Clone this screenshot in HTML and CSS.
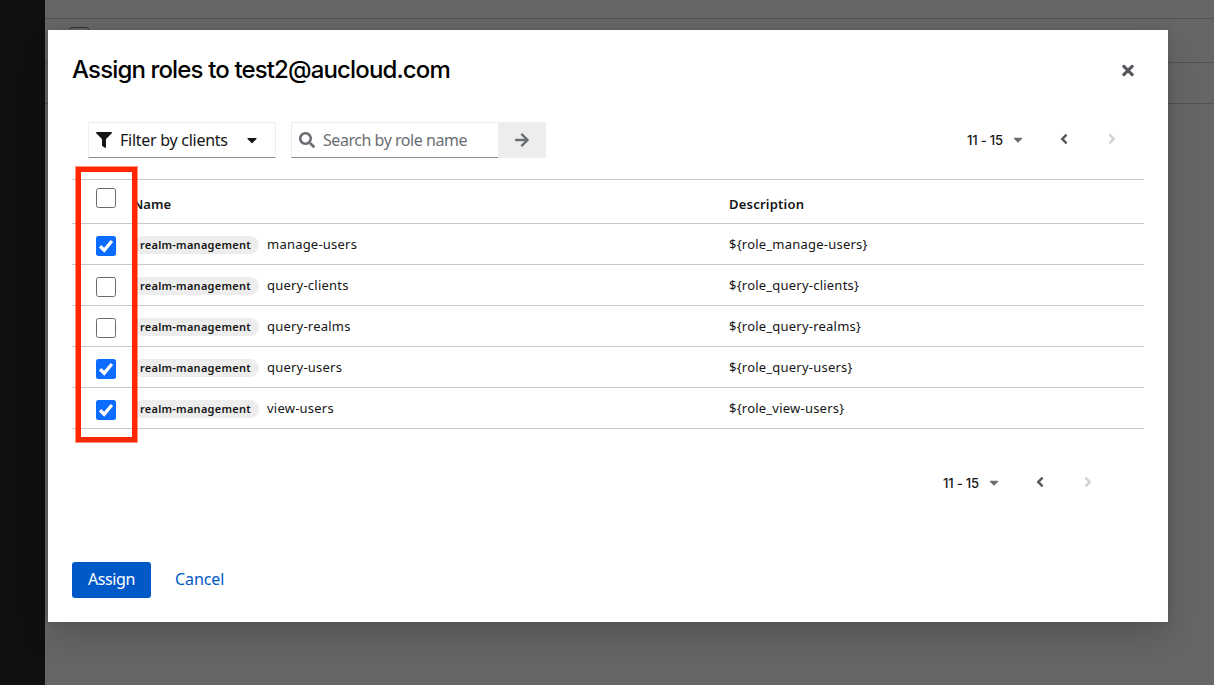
FILE: index.html
```html
<!DOCTYPE html>
<html lang="en">
<head>
<meta charset="utf-8">
<title>Assign roles</title>
<link rel="stylesheet" href="styles.css">
</head>
<body>
<svg class="defs" width="0" height="0" aria-hidden="true">
  <symbol id="filter" viewBox="0 0 512 512"><path d="M487.976 0H24.028C2.71 0-8.047 25.866 7.058 40.971L192 225.941V432c0 7.831 3.821 15.17 10.237 19.662l80 55.98C298.02 518.69 320 507.493 320 487.98V225.941l184.947-184.97C520.021 25.896 509.338 0 487.976 0z"/></symbol>
  <symbol id="search" viewBox="0 0 512 512"><path d="M505 442.7L405.3 343c-4.500-4.500-10.600-7-17-7H372c27.600-35.300 44-79.700 44-128C416 93.100 322.900 0 208 0S0 93.100 0 208s93.100 208 208 208c48.300 0 92.700-16.400 128-44v16.300c0 6.400 2.500 12.500 7 17l99.700 99.700c9.400 9.400 24.600 9.400 33.900 0l28.300-28.300c9.400-9.400 9.400-24.600.1-34zM208 336c-70.700 0-128-57.200-128-128 0-70.700 57.200-128 128-128 70.700 0 128 57.200 128 128 0 70.700-57.200 128-128 128z"/></symbol>
  <symbol id="arrow" viewBox="0 0 448 512"><path d="M190.500 66.900l22.200-22.200c9.400-9.400 24.600-9.400 33.900 0L441 239c9.400 9.400 9.400 24.600 0 33.900L246.600 467.300c-9.400 9.400-24.600 9.400-33.900 0l-22.200-22.200c-9.500-9.500-9.300-25 .4-34.300L311.400 296H24c-13.300 0-24-10.700-24-24v-32c0-13.300 10.700-24 24-24h287.400L190.900 101.200c-9.800-9.300-10-24.800-.4-34.300z"/></symbol>
  <symbol id="times" viewBox="0 0 352 512"><path d="M242.720 256l100.070-100.070c12.280-12.280 12.280-32.190 0-44.480l-22.240-22.240c-12.280-12.280-32.190-12.280-44.480 0L176 189.280 75.930 89.210c-12.280-12.280-32.190-12.280-44.480 0L9.210 111.450c-12.280 12.280-12.280 32.190 0 44.480L109.280 256 9.210 356.070c-12.280 12.280-12.280 32.190 0 44.480l22.240 22.240c12.280 12.280 32.200 12.280 44.480 0L176 322.720l100.070 100.070c12.280 12.280 32.200 12.280 44.480 0l22.240-22.240c12.280-12.280 12.280-32.190 0-44.480L242.720 256z"/></symbol>
  <symbol id="left" viewBox="0 0 256 512"><path d="M31.700 239l136-136c9.400-9.400 24.600-9.400 33.900 0l22.600 22.600c9.400 9.400 9.400 24.600 0 33.900L127.900 256l96.400 96.400c9.400 9.400 9.400 24.600 0 33.900L201.700 409c-9.400 9.400-24.600 9.400-33.900 0l-136-136c-9.500-9.400-9.500-24.600-.1-34z"/></symbol>
  <symbol id="right" viewBox="0 0 256 512"><path d="M224.300 273l-136 136c-9.400 9.400-24.600 9.400-33.900 0l-22.600-22.600c-9.400-9.400-9.400-24.600 0-33.900l96.400-96.400-96.400-96.400c-9.400-9.400-9.400-24.600 0-33.900L54.300 103c9.400-9.400 24.600-9.400 33.900 0l136 136c9.500 9.400 9.500 24.600.1 34z"/></symbol>
  <symbol id="caret" viewBox="0 0 320 512"><path d="M31.300 192h257.300c17.800 0 26.700 21.500 14.100 34.100L174.100 354.800c-7.800 7.800-20.500 7.800-28.300 0L17.200 226.100C4.600 213.500 13.500 192 31.300 192z"/></symbol>
  <symbol id="check" viewBox="0 0 20 20"><path d="M4.100 10.300L8.200 14.300 15.900 5" fill="none" stroke="#fff" stroke-width="3.300"/></symbol>
</svg>

<div class="app">
  <div class="sidebar"></div>
  <div class="page">
    <div class="page-top"></div>
    <div class="page-head"><span class="page-check"></span></div>
    <div class="page-row"></div>
  </div>
</div>

<div class="modal">
  <header class="modal-head">
    <h1 class="title">Assign roles to test2@aucloud.com</h1>
    <svg class="icon close"><use href="#times"/></svg>
  </header>

  <div class="toolbar">
    <div class="select"><svg class="icon i16"><use href="#filter"/></svg><span class="select-text">Filter by clients</span><svg class="icon caret-lg"><use href="#caret"/></svg></div>
    <div class="search"><svg class="icon i16"><use href="#search"/></svg><span class="search-text">Search by role name</span></div>
    <div class="go"><svg class="icon go-icon"><use href="#arrow"/></svg></div>
    <div class="pager"><span class="range">11 - 15</span><svg class="icon caret"><use href="#caret"/></svg><svg class="icon angle"><use href="#left"/></svg><svg class="icon angle off"><use href="#right"/></svg></div>
  </div>

  <div class="table">
    <div class="row head"><span class="box"></span><span class="name">Name</span><span class="desc">Description</span></div>
    <div class="row"><span class="box on"><svg class="tick"><use href="#check"/></svg></span><span class="name"><span class="badge">realm-management</span><span class="role">manage-users</span></span><span class="desc">${role_manage-users}</span></div>
    <div class="row"><span class="box"></span><span class="name"><span class="badge">realm-management</span><span class="role">query-clients</span></span><span class="desc">${role_query-clients}</span></div>
    <div class="row"><span class="box"></span><span class="name"><span class="badge">realm-management</span><span class="role">query-realms</span></span><span class="desc">${role_query-realms}</span></div>
    <div class="row"><span class="box on"><svg class="tick"><use href="#check"/></svg></span><span class="name"><span class="badge">realm-management</span><span class="role">query-users</span></span><span class="desc">${role_query-users}</span></div>
    <div class="row"><span class="box on"><svg class="tick"><use href="#check"/></svg></span><span class="name"><span class="badge">realm-management</span><span class="role">view-users</span></span><span class="desc">${role_view-users}</span></div>
    <div class="highlight"></div>
  </div>

  <div class="bottom-bar">
    <div class="pager"><span class="range">11 - 15</span><svg class="icon caret"><use href="#caret"/></svg><svg class="icon angle"><use href="#left"/></svg><svg class="icon angle off"><use href="#right"/></svg></div>
  </div>

  <footer class="actions"><span class="assign">Assign</span><span class="cancel">Cancel</span></footer>
</div>
</body>
</html>
```
FILE: styles.css
```css
* { box-sizing: border-box; }
body {
  margin: 0;
  height: 685px;
  overflow: hidden;
  position: relative;
  font-family: "Noto Sans", sans-serif;
  color: #151515;
  white-space: nowrap;
}
.defs { position: absolute; }
.icon { display: block; flex: none; fill: currentColor; }
.app { display: flex; height: 685px; background: #666; }
.sidebar { width: 45px; background: #0f1110; }
.page { flex: 1; }
.page-top { height: 19px; border-bottom: 1px solid #525252; }
.page-head { height: 44px; border-bottom: 1px solid #525252; padding: 8px 0 0 24px; }
.page-check { display: block; width: 20px; height: 20px; border: 1px solid #303030; border-radius: 3px; }
.page-row { height: 41px; border-bottom: 1px solid #525252; }

.modal {
  position: absolute;
  left: 48px;
  top: 30px;
  width: 1120px;
  height: 592px;
  padding: 0 24px;
  background: #fff;
  box-shadow: 0 16px 32px rgba(3, 3, 3, .16), 0 0 8px rgba(3, 3, 3, .1);
}
.modal-head { display: flex; justify-content: space-between; align-items: center; height: 80px; padding-right: 10px; }
.title { margin: 0; font: 500 24px/32px Inter, sans-serif; letter-spacing: -.86px; color: #000; }
.close { width: 12px; height: 17px; color: #55585d; margin-top: 1px; }

.toolbar { display: flex; align-items: center; height: 36px; margin-top: 12px; padding: 0 22px 0 16px; }
.select, .search {
  display: flex;
  align-items: center;
  height: 36px;
  border: 1px solid #ededed;
  border-bottom-color: #8a8d90;
  font-size: 16px;
  line-height: 22px;
  padding-left: 7px;
}
.select { width: 188px; margin-right: 15px; }
.i16 { width: 16px; height: 16px; }
.select-text { width: 108px; margin: 0 19px 1px 8px; letter-spacing: -.27px; }
.caret-lg { width: 10px; height: 16px; }
.search { width: 207px; border-right: 0; color: #6a6e73; }
.search-text { margin: 0 0 1px 8px; letter-spacing: -.46px; }
.go { display: flex; align-items: center; justify-content: center; width: 48px; height: 36px; background: #ededed; color: #6a6e73; }
.go-icon { width: 14px; height: 16px; margin-bottom: 1px; }
.pager { display: flex; align-items: center; margin-left: auto; color: #6a6e73; }
.range { width: 38px; font: 500 13px/20px Inter, sans-serif; letter-spacing: -.2px; color: #151515; }
.caret { width: 10px; height: 15px; margin: 0 37px 1px 8px; }
.angle { width: 8px; height: 16px; margin: 0 40px 2px 0; color: #55585d; }
.off { color: #d2d2d2; margin-right: 6px; }

.table { position: relative; margin-top: 21px; border-top: 1px solid #c8c8c8; }
.row { display: grid; grid-template-columns: 24px 37px 596px 1fr; height: 41px; border-bottom: 1px solid #c8c8c8; font-size: 13px; line-height: 20px; letter-spacing: .22px; }
.box { grid-column: 2; width: 20px; height: 20px; margin-top: 12px; border: 1px solid #6b6b6b; border-radius: 2.500px; background: #fff; }
.box.on { border: 0; background: #0b6cff; }
.tick { display: block; width: 20px; height: 20px; }
.name { display: flex; padding-top: 10px; }
.desc { padding-top: 10px; }
.head { height: 44px; font-weight: 600; }
.head .box { margin-top: 8px; }
.head .name { padding-top: 14px; letter-spacing: 0; }
.head .desc { padding-top: 14px; }
.badge { width: 126px; height: 18px; margin: 2px 8px 0 0; padding-left: 7px; border-radius: 9px; background: #ededed; font-size: 11px; font-weight: 600; line-height: 18px; letter-spacing: .25px; }
.highlight { position: absolute; left: 4px; top: -13px; width: 61px; height: 275px; border: 5px solid #ff2600; box-shadow: 0 0 0 1px rgba(255, 38, 0, .5); }

.bottom-bar { display: flex; height: 36px; margin-top: 36px; padding-right: 46px; }
.actions { display: flex; align-items: center; gap: 24px; height: 36px; margin-top: 61px; font-size: 16px; }
.assign { width: 79px; height: 36px; border-radius: 3px; background: #0059c8; color: #fff; text-align: center; line-height: 35px; letter-spacing: -.4px; }
.cancel { color: #0059c8; line-height: 35px; letter-spacing: -.1px; margin-bottom: 1px; }
```
